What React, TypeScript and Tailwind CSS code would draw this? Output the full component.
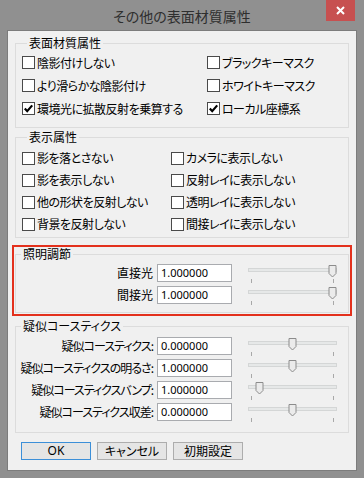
import React from "react";

const Check = ({ checked }: { checked?: boolean }) => (
  <span className="w-[13px] h-[13px] border border-[#4a4a4a] bg-white flex items-center justify-center shrink-0">
    {checked && (
      <svg width="11" height="11" viewBox="0 0 11 11" className="block">
        <path d="M1.8 5.6 L4.2 8.2 L9.2 2.4" fill="none" stroke="#000" strokeWidth="2.2" />
      </svg>
    )}
  </span>
);

const CheckItem = ({ label, checked }: { label: string; checked?: boolean }) => (
  <div className="flex items-center gap-[2px] whitespace-nowrap">
    <Check checked={checked} />
    <span className="tracking-[-0.5px]">{label}</span>
  </div>
);

const Slider = ({ pos }: { pos: number }) => (
  <svg width="92" height="22" viewBox="0 0 92 22" className="block shrink-0">
    <rect x="0.5" y="6.5" width="88" height="3" fill="#e6e8e8" stroke="#d4d6d6" />
    <path
      d={`M${pos - 3.5} 3.5 H${pos + 3.5} V11.5 L${pos} 15 L${pos - 3.5} 11.5 Z`}
      fill="#ebebeb"
      stroke="#8c8c8c"
    />
    <line x1="3.5" y1="17" x2="3.5" y2="21" stroke="#a8a8a8" />
    <line x1="85.5" y1="17" x2="85.5" y2="21" stroke="#a8a8a8" />
  </svg>
);

const ValueRow = ({ label, value, pos, tight }: { label: string; value: string; pos: number; tight?: boolean }) => (
  <div className="flex items-center h-[22px]">
    <div className="w-[137px] flex justify-end shrink-0 whitespace-nowrap">
      <span className={tight ? "tracking-[-1px]" : "tracking-[0px]"}>{label}</span>
    </div>
    <div className="ml-[4px] w-[75px] h-[18px] border border-[#a9abaf] bg-white pl-[3px] flex items-center font-['Noto_Sans',sans-serif] text-[11px] leading-[16px] text-black shrink-0">
      {value}
    </div>
    <div className="ml-[16px]">
      <Slider pos={pos} />
    </div>
  </div>
);

const Legend = ({ children }: { children: React.ReactNode }) => (
  <legend className="ml-[5px] px-[2px] leading-[14px]">{children}</legend>
);

export default function App() {
  return (
    <div className="w-[364px] h-[478px] bg-[#909090] flex flex-col font-['Noto_Sans_CJK_JP',sans-serif] text-[12px] leading-[14px] text-black [font-feature-settings:'palt']">
      <div className="relative h-[30px] flex items-center justify-center shrink-0">
        <span className="text-[14px] leading-[16px] text-[#2e2e2e] mt-[2px]">その他の表面材質属性</span>
        <div className="absolute top-0 right-[9px] w-[29px] h-[21px] bg-[#c75050] flex items-center justify-center">
          <svg width="9" height="9" viewBox="0 0 9 9" className="block">
            <path d="M1 1 L8 8 M8 1 L1 8" stroke="#fff" strokeWidth="2" />
          </svg>
        </div>
      </div>
      <div className="mx-[7px] h-[441px] border border-[#7c7c7c] bg-[#f0f0f0] px-[7px] pt-[5px] flex flex-col shrink-0">
        <fieldset className="border border-[#dcdcdc] pt-[1px] pb-[7px] pl-[6px]">
          <Legend>表面材質属性</Legend>
          <div className="grid grid-cols-[185px_1fr] auto-rows-[23px] items-center">
            <CheckItem label="陰影付けしない" />
            <CheckItem label="ブラックキーマスク" />
            <CheckItem label="より滑らかな陰影付け" />
            <CheckItem label="ホワイトキーマスク" />
            <CheckItem label="環境光に拡散反射を乗算する" checked />
            <CheckItem label="ローカル座標系" checked />
          </div>
        </fieldset>
        <fieldset className="mt-[2px] border border-[#dcdcdc] pt-[3px] pb-[2px] pl-[6px]">
          <Legend>表示属性</Legend>
          <div className="grid grid-cols-[149px_1fr] auto-rows-[22px] items-center">
            <CheckItem label="影を落とさない" />
            <CheckItem label="カメラに表示しない" />
            <CheckItem label="影を表示しない" />
            <CheckItem label="反射レイに表示しない" />
            <CheckItem label="他の形状を反射しない" />
            <CheckItem label="透明レイに表示しない" />
            <CheckItem label="背景を反射しない" />
            <CheckItem label="間接レイに表示しない" />
          </div>
        </fieldset>
        <div className="mt-[7px] -mx-[3px] border-2 border-[#e3301c] px-[1px] pb-[1px]">
          <fieldset className="border border-[#dcdcdc] pt-[1px] pb-[6px]">
            <Legend>照明調節</Legend>
            <ValueRow label="直接光" value="1.000000" pos={84.5} />
            <ValueRow label="間接光" value="1.000000" pos={84.5} />
          </fieldset>
        </div>
        <fieldset className="mt-[3px] border border-[#dcdcdc] pt-[2px] pb-[9px]">
          <Legend>疑似コースティクス</Legend>
          <ValueRow label="疑似コースティクス:" value="0.000000" pos={44.5} tight />
          <ValueRow label="疑似コースティクスの明るさ:" value="1.000000" pos={44.5} tight />
          <ValueRow label="疑似コースティクスバンプ:" value="1.000000" pos={11.5} tight />
          <ValueRow label="疑似コースティクス収差:" value="0.000000" pos={44.5} tight />
        </fieldset>
        <div className="mt-[9px] ml-[6px] flex gap-[6px]">
          <div className="w-[70px] h-[18px] border border-[#3c8fd8] bg-[#e5e5e5] flex items-center justify-center font-['Noto_Sans',sans-serif]">
            OK
          </div>
          <div className="w-[70px] h-[18px] border border-[#adadad] bg-[#e5e5e5] flex items-center justify-center">
            キャンセル
          </div>
          <div className="w-[70px] h-[18px] border border-[#adadad] bg-[#e5e5e5] flex items-center justify-center">
            初期設定
          </div>
        </div>
      </div>
    </div>
  );
}
